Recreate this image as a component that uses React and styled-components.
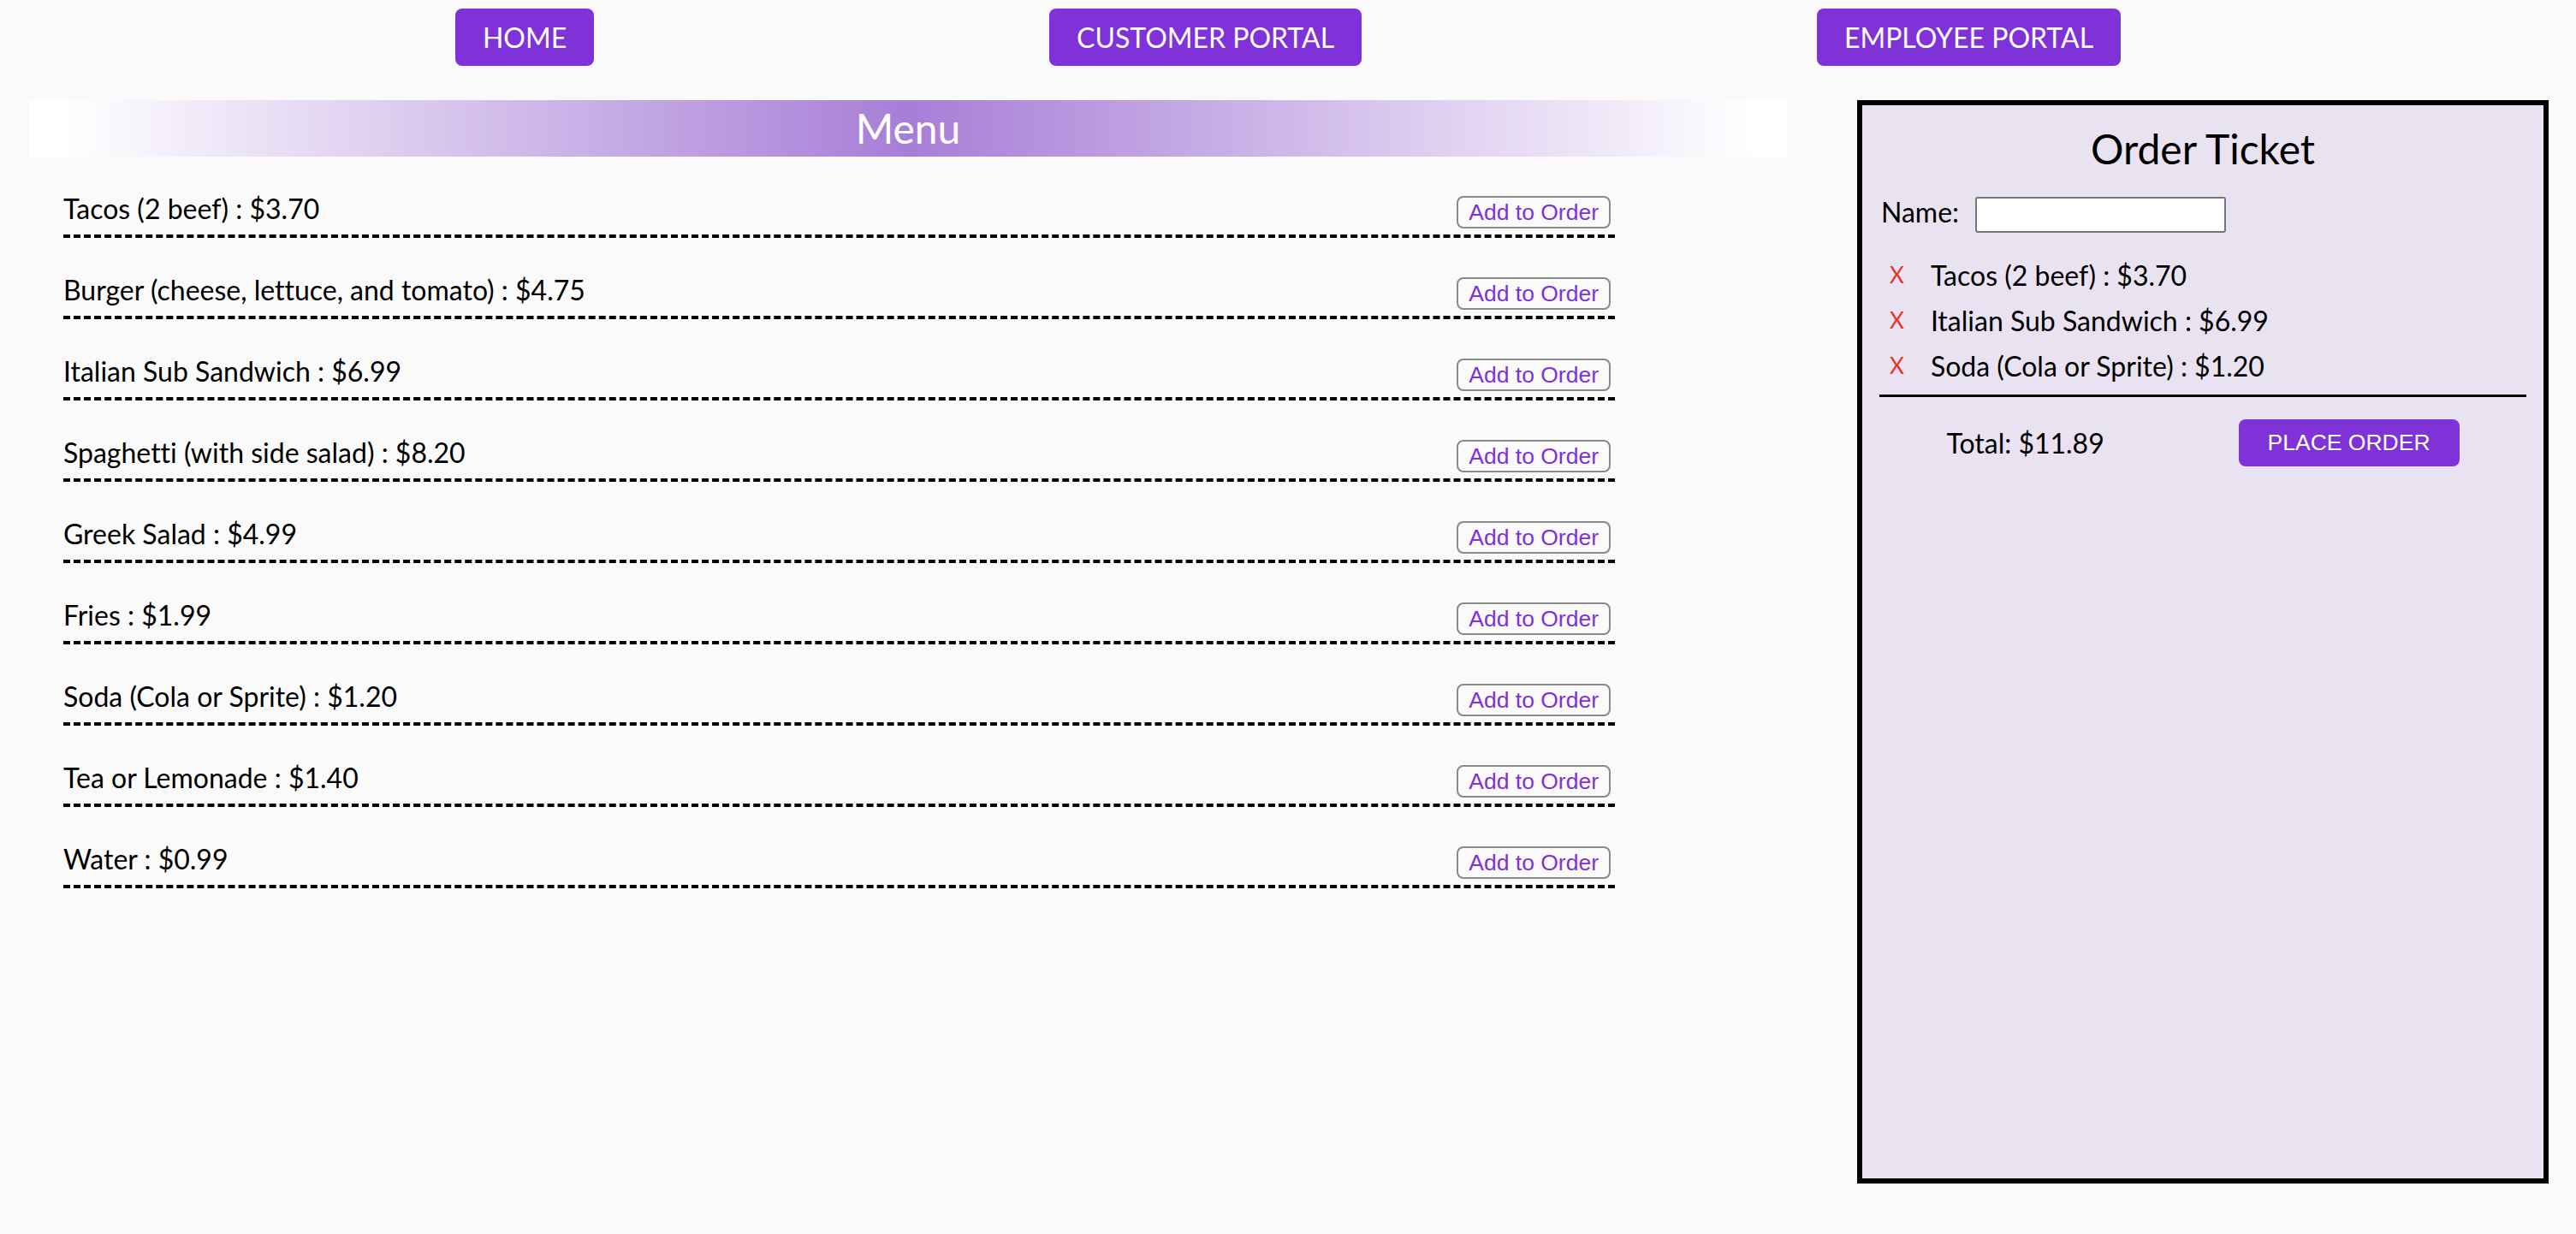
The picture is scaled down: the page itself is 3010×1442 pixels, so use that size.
import React from "react";
import styled, { createGlobalStyle } from "styled-components";

const GlobalStyle = createGlobalStyle`
  html, body {
    margin: 0;
    padding: 0;
    background: #fafafa;
  }
  body {
    font-family: "Lato", "Open Sans", sans-serif;
    font-variant-ligatures: none;
    color: #000;
  }
  * { box-sizing: border-box; }
`;

const Page = styled.div`
  min-height: 100vh;
  background: #fafafa;
  padding-top: 10px;
`;

const Nav = styled.nav`
  display: flex;
  justify-content: space-evenly;
`;

const NavButton = styled.button`
  height: 67px;
  padding: 0 32px;
  border: none;
  border-radius: 8px;
  background: #7e32d8;
  color: #fff;
  font-family: "Lato", sans-serif;
  font-size: 32px;
  font-weight: 400;
  font-variant-ligatures: none;
  text-transform: uppercase;
  cursor: pointer;
`;

const Main = styled.main`
  display: flex;
  align-items: flex-start;
  gap: 82px;
  padding: 0 32px 0 34px;
  margin-top: 40px;
`;

const MenuColumn = styled.section`
  flex: 1;
`;

const MenuBar = styled.h2`
  margin: 0;
  height: 66px;
  display: flex;
  align-items: center;
  justify-content: center;
  background: linear-gradient(90deg, #ffffff 2%, #a77ed7 50%, #ffffff 98%);
  color: #fff;
  font-size: 48px;
  font-weight: 400;
  line-height: 1;
`;

const MenuList = styled.ul`
  list-style: none;
  margin: 0;
  padding: 0 0 0 40px;
  width: 1853px;
`;

const MenuItem = styled.li`
  display: flex;
  justify-content: space-between;
  align-items: flex-end;
  margin-top: 45px;
  padding: 0 5px 7px 0;
  border-bottom: 4px dashed #000;
  font-size: 32px;
`;

const ItemText = styled.span`
  line-height: 1;
  margin-bottom: 7px;
`;

const AddButton = styled.button`
  height: 38px;
  padding: 0 12px;
  background: transparent;
  border: 2px solid #8a8a8a;
  border-radius: 8px;
  color: #7e32d8;
  font-family: "Liberation Sans", Arial, sans-serif;
  font-size: 26.5px;
  line-height: 1;
  cursor: pointer;
`;

const Ticket = styled.aside`
  width: 808px;
  height: 1266px;
  border: 6px solid #000;
  background: #e9e3f1;
  display: flex;
  flex-direction: column;
`;

const TicketTitle = styled.h2`
  margin: 22px 0 0;
  text-align: center;
  font-size: 48px;
  font-weight: 400;
  line-height: 1.2;
`;

const NameRow = styled.label`
  display: flex;
  align-items: center;
  gap: 19px;
  margin-top: 26px;
  padding-left: 22px;
  font-size: 32px;
  line-height: 1.2;
`;

const NameLabel = styled.span`
  margin-bottom: 6px;
`;

const NameInput = styled.input`
  width: 293px;
  height: 42px;
  border: 2px solid #767676;
  border-radius: 3px;
  background: #fff;
  font-size: 24px;
  padding: 0 8px;
`;

const OrderList = styled.ul`
  list-style: none;
  margin: 22px 0 0;
  padding: 0 0 0 32px;
`;

const OrderItem = styled.li`
  display: flex;
  align-items: center;
  height: 53px;
  font-size: 32px;
`;

const RemoveButton = styled.button`
  background: none;
  border: none;
  padding: 0;
  margin-right: 31px;
  color: #e8322a;
  font-family: "Lato", sans-serif;
  font-size: 26px;
  line-height: 1;
  cursor: pointer;
`;

const Divider = styled.hr`
  margin: 7px 20px 0;
  border: none;
  border-top: 3px solid #000;
  height: 0;
`;

const TotalRow = styled.div`
  display: flex;
  justify-content: space-around;
  align-items: center;
  margin: 26px 20px 0;
  font-size: 32px;
`;

const PlaceButton = styled.button`
  height: 55px;
  padding: 0 34px;
  border: none;
  border-radius: 8px;
  background: #7e32d8;
  color: #fff;
  font-family: "Liberation Sans", Arial, sans-serif;
  font-size: 26.5px;
  cursor: pointer;
`;

const menu = [
  ["Tacos (2 beef)", "3.70"],
  ["Burger (cheese, lettuce, and tomato)", "4.75"],
  ["Italian Sub Sandwich", "6.99"],
  ["Spaghetti (with side salad)", "8.20"],
  ["Greek Salad", "4.99"],
  ["Fries", "1.99"],
  ["Soda (Cola or Sprite)", "1.20"],
  ["Tea or Lemonade", "1.40"],
  ["Water", "0.99"],
];

const order = [
  ["Tacos (2 beef)", "3.70"],
  ["Italian Sub Sandwich", "6.99"],
  ["Soda (Cola or Sprite)", "1.20"],
];

export default function App() {
  return (
    <Page>
      <GlobalStyle />
      <Nav>
        <NavButton>Home</NavButton>
        <NavButton>Customer Portal</NavButton>
        <NavButton>Employee Portal</NavButton>
      </Nav>
      <Main>
        <MenuColumn>
          <MenuBar>Menu</MenuBar>
          <MenuList>
            {menu.map(([name, price]) => (
              <MenuItem key={name}>
                <ItemText>
                  {name} : ${price}
                </ItemText>
                <AddButton>Add to Order</AddButton>
              </MenuItem>
            ))}
          </MenuList>
        </MenuColumn>
        <Ticket>
          <TicketTitle>Order Ticket</TicketTitle>
          <NameRow>
            <NameLabel>Name:</NameLabel>
            <NameInput type="text" />
          </NameRow>
          <OrderList>
            {order.map(([name, price]) => (
              <OrderItem key={name}>
                <RemoveButton>X</RemoveButton>
                {name} : ${price}
              </OrderItem>
            ))}
          </OrderList>
          <Divider />
          <TotalRow>
            <span>Total: $11.89</span>
            <PlaceButton>PLACE ORDER</PlaceButton>
          </TotalRow>
        </Ticket>
      </Main>
    </Page>
  );
}
